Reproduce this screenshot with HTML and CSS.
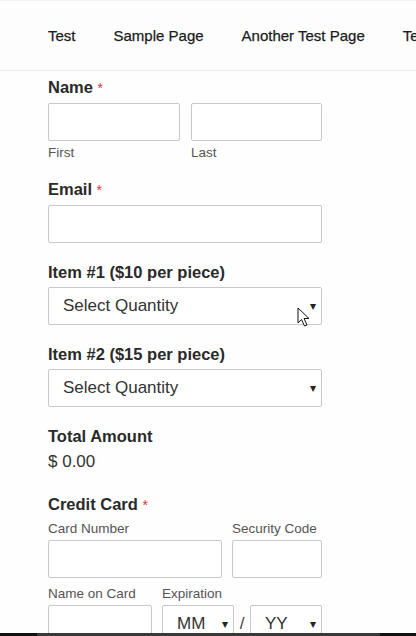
FILE: index.html
```html
<!DOCTYPE html>
<html>

<head>
    <meta http-equiv="Content-Type" content="text/html; charset=utf-8" />
    <meta name="viewport" content="width=device-width, initial-scale=1.0" />
    <title>Order Form</title>
    <link rel="stylesheet" href="styles.css">
</head>

<body>
    <div id="header">
        <ul class="nav">
            <li>Test</li>
            <li>Sample Page</li>
            <li>Another Test Page</li>
            <li>Test Page</li>
        </ul>
    </div>

    <form id="order">
        <div class="field name">
            <p class="label">Name <span class="req">*</span></p>
            <div class="row">
                <div class="col first">
                    <input type="text">
                    <p class="sub">First</p>
                </div>
                <div class="col last">
                    <input type="text">
                    <p class="sub">Last</p>
                </div>
            </div>
        </div>

        <div class="field">
            <p class="label">Email <span class="req">*</span></p>
            <input type="text">
        </div>

        <div class="field">
            <p class="label">Item #1 ($10 per piece)</p>
            <div class="select">Select Quantity<span class="arrow">&#9662;</span></div>
        </div>

        <div class="field">
            <p class="label">Item #2 ($15 per piece)</p>
            <div class="select">Select Quantity<span class="arrow">&#9662;</span></div>
        </div>

        <div class="field total-field">
            <p class="label">Total Amount</p>
            <p class="total">$ 0.00</p>
        </div>

        <div class="field">
            <p class="label">Credit Card <span class="req">*</span></p>
            <div class="row">
                <div class="col number">
                    <p class="sub top">Card Number</p>
                    <input type="text">
                </div>
                <div class="col code">
                    <p class="sub top">Security Code</p>
                    <input type="text">
                </div>
            </div>
            <div class="row card2">
                <div class="col holder">
                    <p class="sub top">Name on Card</p>
                    <input type="text">
                </div>
                <div class="col expire">
                    <p class="sub top">Expiration</p>
                    <div class="exp">
                        <div class="select small">MM<span class="arrow">&#9662;</span></div>
                        <span class="slash">/</span>
                        <div class="select small">YY<span class="arrow">&#9662;</span></div>
                    </div>
                </div>
            </div>
        </div>
    </form>

    <!-- mouse pointer from the recording -->
    <svg class="cursor" width="14" height="20" viewBox="0 0 14 20">
        <path d="M1 1 L1 16 L4.5 12.5 L7.5 19 L10 18 L7 11.5 L12 11.5 Z" fill="#fff" stroke="#111" stroke-width="1" stroke-linejoin="round" />
    </svg>

    <div class="bottombar">
        <span class="edge"></span>
        <span class="mid"></span>
        <span class="edge"></span>
    </div>
</body>

</html>
```

FILE: styles.css
```css
* {
    margin: 0;
    padding: 0;
    box-sizing: border-box;
}

body {
    background-color: #fefefe;
    font-family: "Liberation Sans", Arial, sans-serif;
    color: #2b2b2b;
    overflow: hidden;
    height: 636px;
}

#header {
    height: 71px;
    background-color: #fdfdfd;
    border-top: 1px solid #f2f2f2;
    border-bottom: 1px solid #ececec;
    overflow: hidden;
}

.nav {
    list-style: none;
    display: flex;
    gap: 38px;
    padding: 0 0 0 48px;
    height: 100%;
    align-items: center;
    white-space: nowrap;
    font-size: 15px;
    color: #1c1c1c;
    -webkit-text-stroke: 0.25px #1c1c1c;
}

#order {
    width: 322px;
    padding: 6px 0 0 48px;
}

.field {
    margin-bottom: 19px;
}

.field.name {
    margin-bottom: 17px;
}

.field.total-field {
    margin-bottom: 21px;
}

.label {
    font-size: 16.5px;
    font-weight: bold;
    line-height: 20px;
    margin-bottom: 5px;
    color: #2a2a2a;
}

.req {
    color: #d63638;
    font-weight: normal;
    font-size: 14px;
}

input {
    display: block;
    width: 100%;
    height: 38px;
    border: 1px solid #c8c8cc;
    border-radius: 2px;
    background-color: #fff;
}

.row {
    display: flex;
}

.sub {
    font-size: 13.5px;
    line-height: 18px;
    color: #555;
    margin-top: 3px;
}

.sub.top {
    margin: 0 0 2px;
}

.first {
    width: 132px;
    margin-right: 11px;
}

.last {
    width: 131px;
}

.number {
    width: 174px;
    margin-right: 10px;
}

.code {
    width: 90px;
}

.card2 {
    margin-top: 7px;
}

.holder {
    width: 104px;
    margin-right: 10px;
}

.expire {
    width: 160px;
}

.exp {
    display: flex;
    align-items: center;
}

.select {
    position: relative;
    height: 38px;
    border: 1px solid #c8c8cc;
    border-radius: 2px;
    background-color: #fff;
    font-size: 17px;
    line-height: 36px;
    padding-left: 14px;
    color: #333;
}

.select .arrow {
    position: absolute;
    right: 5px;
    top: 0;
    font-size: 12px;
    color: #222;
}

.select.small {
    width: 72px;
    padding-left: 14px;
}

.slash {
    width: 16px;
    text-align: center;
    font-size: 17px;
    color: #444;
}

.total {
    font-size: 17px;
    line-height: 22px;
    margin-top: 5px;
    color: #333;
}

.cursor {
    position: absolute;
    left: 297px;
    top: 307px;
}

.bottombar {
    position: fixed;
    left: 0;
    bottom: 0;
    width: 100%;
    height: 3px;
    display: flex;
}

.bottombar .edge {
    width: 37px;
    background-color: #111;
}

.bottombar .edge:last-child {
    width: 36px;
}

.bottombar .mid {
    flex: 1;
    background-color: #383838;
}
```
